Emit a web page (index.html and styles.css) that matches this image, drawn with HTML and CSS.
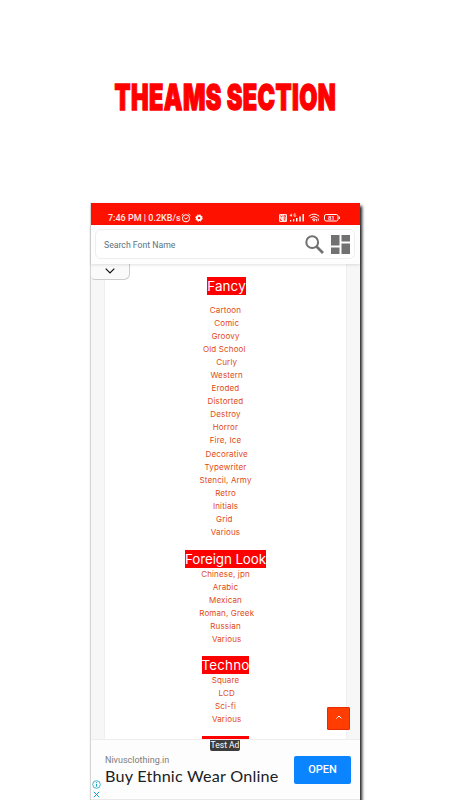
FILE: index.html
```html
<!DOCTYPE html>
<html lang="en">
<head>
    <meta charset="UTF-8">
    <meta name="viewport" content="width=device-width, initial-scale=1.0">
    <title>Theams Section</title>
    <link rel="stylesheet" href="styles.css">
</head>
<body>

    <h1 class="page-title"><span>THEAMS SECTION</span></h1>

    <div class="phone">
        <!-- Status Bar -->
        <div class="status-bar">
            <span class="status-time">7:46 PM | 0.2KB/s</span>
            <svg class="alarm" width="10" height="10" viewBox="0 0 10 10" fill="none" stroke="#fff">
                <circle cx="5" cy="5.3" r="3.6"/>
                <path d="M.7 2.4 2.5.8M9.3 2.4 7.5.8M3.4 4.8 5 6.2 7 4.2"/>
            </svg>
            <svg class="gear" width="8" height="8" viewBox="0 0 8 8" fill="none" stroke="#fff">
                <circle cx="4" cy="4" r="2.2" stroke-width="1.8"/>
                <circle cx="4" cy="4" r="3.3" stroke-width="1" stroke-dasharray="1.3 1.3"/>
            </svg>
            <span class="status-icons">
                <svg width="8" height="8" viewBox="0 0 8 8">
                    <rect width="8" height="8" rx="1.2" fill="#ffe4e0"/>
                    <path d="M1.5 1.5 2.5 3.2 3.5 1.5M5 1.5h1.5v1.7H5zM1.5 4.8v1.7h1.6M4.6 4.8h2M5.6 4.8v1.8" fill="none" stroke="#f10" stroke-width=".7"/>
                </svg>
                <svg class="signal" width="16" height="9" viewBox="0 0 16 9">
                    <path d="M2.5.7 1 2.7h2M2.6 1.3v2.2M6.8 1H5v2.2h1.8V2.3" fill="none" stroke="#fff" stroke-width=".7"/>
                    <path d="M1 7h1.3v1.5H1zM4 6h1.3v2.5H4zM7 5h1.5v3.5H7zM10.2 3.5h1.6v5h-1.6zM13.5 1H15v7.5h-1.5z" fill="#fff"/>
                </svg>
                <svg class="wifi" width="12" height="9" viewBox="0 0 12 9" fill="none" stroke="#fff">
                    <path d="M.8 3.2Q6-1 11.2 3.2M2.5 4.9Q6 2 9.5 4.9M4.1 6.5Q6 5 7.6 6.5"/>
                    <path d="M5.1 7.2h1.8L6 8.3zM8.6 6v2.5M10.3 5.5V8" fill="#fff" stroke-width=".8"/>
                </svg>
                <svg class="battery" width="17" height="8" viewBox="0 0 17 8">
                    <rect x=".5" y=".5" width="13.5" height="6.5" rx="1.7" fill="none" stroke="#fff"/>
                    <path d="M15.3 2.5v2.5" stroke="#fff" stroke-width="1.2"/>
                    <text x="7.3" y="6" class="battery-text">81</text>
                </svg>
            </span>
        </div>

        <!-- Search -->
        <div class="search-bar">
            <div class="search-box">
                <span class="search-label">Search Font Name</span>
                <svg class="search-icon" width="19" height="19" viewBox="0 0 19 19" fill="none" stroke="#717171">
                    <circle cx="7.2" cy="7.2" r="5.9" stroke-width="2"/>
                    <path d="M11.5 11.5 18 18" stroke-width="2.6"/>
                </svg>
                <svg class="grid-icon" width="19" height="19" viewBox="0 0 19 19" fill="#717171">
                    <path d="M0 0h8.500v10.500H0zM10.500 0H19v6.500h-8.500zM0 12.500h8.500V19H0zM10.500 8.500H19V19h-8.500z"/>
                </svg>
            </div>
        </div>

        <!-- Theme List -->
        <div class="content">
            <div class="drawer-tab">
                <svg width="10" height="6" viewBox="0 0 10 6" fill="none" stroke="#111" stroke-width="1.2"><path d="M.7.7 5 5 9.3.7"/></svg>
            </div>
            <div class="card">
                <h2 class="fancy"><span>Fancy</span></h2>
                <ul class="fancy-list">
                    <li>Cartoon</li>
                    <li>&nbsp;Comic</li>
                    <li>Groovy</li>
                    <li>Old School&nbsp;</li>
                    <li>&nbsp;Curly</li>
                    <li>&nbsp;Western</li>
                    <li>Eroded</li>
                    <li>Distorted</li>
                    <li>Destroy</li>
                    <li>Horror</li>
                    <li>Fire, Ice</li>
                    <li>&nbsp;Decorative</li>
                    <li>Typewriter</li>
                    <li>Stencil, Army</li>
                    <li>Retro</li>
                    <li>Initials</li>
                    <li>Grid&nbsp;</li>
                    <li>Various</li>
                </ul>
                <h2 class="foreign"><span>Foreign Look</span></h2>
                <ul>
                    <li>Chinese, jpn</li>
                    <li>Arabic</li>
                    <li>Mexican</li>
                    <li>&nbsp;Roman, Greek</li>
                    <li>Russian</li>
                    <li>&nbsp;Various</li>
                </ul>
                <h2 class="techno"><span>Techno</span></h2>
                <ul>
                    <li>Square</li>
                    <li>&nbsp;LCD</li>
                    <li>Sci-fi</li>
                    <li>&nbsp;Various</li>
                </ul>
                <div class="next-heading"></div>
            </div>
            <div class="to-top">
                <svg width="6" height="4" viewBox="0 0 6 4" fill="none" stroke="#fff"><path d="M.5 3.5 3 1l2.500 2.500"/></svg>
            </div>
        </div>

        <!-- Ad Banner -->
        <div class="ad">
            <span class="test-ad">Test Ad</span>
            <div class="ad-marks">
                <svg width="9" height="9" viewBox="0 0 9 9" fill="none" stroke="#12a5c4"><circle cx="4.5" cy="4.5" r="3.8" stroke-width=".8"/><path d="M4.5 4v2.7M4.5 2.2v1"/></svg>
                <svg width="7" height="7" viewBox="0 0 7 7" fill="none" stroke="#12a5c4"><path d="M.8.8 6.2 6.2M6.2.8.8 6.2"/></svg>
            </div>
            <div class="ad-text">
                <p class="ad-site">Nivusclothing.in</p>
                <p class="ad-title">Buy Ethnic Wear Online</p>
            </div>
            <div class="ad-button">OPEN</div>
        </div>
    </div>

</body>
</html>
```

FILE: styles.css
```css
/* Global Styles */
* {
    margin: 0;
    padding: 0;
    box-sizing: border-box;
}

body {
    width: 450px;
    height: 800px;
    overflow: hidden;
    background: #fff;
    font-family: Inter, sans-serif;
}

svg {
    display: block;
    flex: none;
}

/* Title */
.page-title {
    height: 203px;
    padding-top: 77px;
    text-align: center;
    font-size: 35px;
    font-weight: 900;
    line-height: 40px;
    color: #f00;
    white-space: nowrap;
}

.page-title span {
    display: inline-block;
    letter-spacing: 0.6px;
    transform: scaleX(0.67);
    -webkit-text-stroke: 1.3px #f00;
}

/* Phone */
.phone {
    display: flex;
    flex-direction: column;
    width: 269px;
    height: 597px;
    margin-left: 91px;
    background: #fff;
    box-shadow: 2px 3px 3px rgba(0, 0, 0, 0.9), -1px 0 1px rgba(0, 0, 0, 0.12);
}

/* Status Bar */
.status-bar {
    display: flex;
    align-items: center;
    height: 22px;
    padding: 7px 19px 0 17px;
    background: #f10;
    color: #ffe9e6;
    font-family: Roboto, sans-serif;
    font-size: 9px;
    font-weight: 500;
}

.status-time {
    width: 72px;
    white-space: nowrap;
}

.alarm {
    margin-left: 1px;
}

.gear {
    margin-left: 4px;
}

.status-icons {
    display: flex;
    align-items: center;
    margin-left: auto;
}

.signal {
    margin-left: 2px;
}

.wifi {
    margin-left: 3px;
}

.battery {
    margin-left: 4px;
}

.battery-text {
    font-size: 6px;
    fill: #fff;
    text-anchor: middle;
}

/* Search */
.search-bar {
    height: 39px;
    padding: 4px 5px 0 4px;
    background: #fdfdfd;
    box-shadow: 0 1px 3px rgba(0, 0, 0, 0.12);
    z-index: 1;
}

.search-box {
    display: flex;
    align-items: center;
    height: 30px;
    padding: 0 4px 0 8px;
    border: 1px solid #eee;
    border-radius: 6px;
    background: #fff;
}

.search-label {
    flex: 1;
    padding-top: 1px;
    font-family: Roboto, sans-serif;
    font-size: 8.7px;
    color: #5c7480;
}

.grid-icon {
    margin-left: 7px;
}

/* Theme List */
.content {
    position: relative;
    height: 475px;
    padding: 0 14px;
    background: #f7f7f7;
    overflow: hidden;
}

.drawer-tab {
    position: absolute;
    top: 0;
    left: 0;
    display: flex;
    justify-content: center;
    width: 39px;
    height: 16px;
    padding-top: 4px;
    background: #fafafa;
    border: 1px solid #ccc;
    border-width: 0 1px 1px 0;
    border-radius: 0 0 6px 4px;
}

.card {
    height: 475px;
    background: #fff;
    box-shadow: 0 0 1px rgba(0, 0, 0, 0.2);
    text-align: center;
}

.card h2 {
    display: flex;
    justify-content: center;
    height: 18px;
    font-size: 13.4px;
    font-weight: 400;
    line-height: 18px;
    color: #fff;
    white-space: nowrap;
}

.card h2 span {
    background: #f00;
}

.card .fancy {
    height: 31px;
    padding: 13px 0 0 2px;
    letter-spacing: 0.15px;
}

.card .foreign {
    margin-top: 11px;
    letter-spacing: -0.1px;
}

.card .techno {
    margin-top: 10px;
    letter-spacing: 0.15px;
}

.card ul {
    list-style: none;
}

.card .fancy-list {
    margin-top: 9px;
}

.card li {
    height: 13.06px;
    font-size: 8px;
    font-weight: 400;
    line-height: 13px;
    letter-spacing: 0.15px;
    color: #e04a14;
}

.next-heading {
    width: 47px;
    height: 18px;
    margin: 10px auto 0;
    background: #f00;
}

.to-top {
    position: absolute;
    top: 443px;
    left: 236px;
    display: flex;
    align-items: center;
    justify-content: center;
    width: 23px;
    height: 23px;
    padding-bottom: 3px;
    background: #ff3d00;
    border: 1px solid #e62b00;
    border-radius: 1px;
}

/* Ad Banner */
.ad {
    position: relative;
    display: flex;
    height: 61px;
    background: #fdfdfd;
    border-top: 1px solid #eee;
    border-bottom: 1px solid #e8e8e8;
}

.test-ad {
    position: absolute;
    top: 0;
    left: 119px;
    width: 30px;
    height: 11px;
    border-radius: 0 0 2px 2px;
    background: #3c3c3c;
    color: #fff;
    font-family: Roboto, sans-serif;
    font-size: 8.5px;
    line-height: 11px;
    text-align: center;
    white-space: nowrap;
}

.ad-marks {
    display: flex;
    flex-direction: column;
    align-items: center;
    gap: 2px;
    width: 9px;
    margin-left: 1px;
    padding-top: 40px;
}

.ad-text {
    flex: 1;
    padding: 14px 0 0 4px;
    white-space: nowrap;
}

.ad-site {
    font-family: Roboto, sans-serif;
    font-size: 9px;
    line-height: 13px;
    color: #7c7c7c;
}

.ad-title {
    font-family: Lato, sans-serif;
    font-size: 16.2px;
    letter-spacing: 0.2px;
    line-height: 17px;
    color: #202124;
}

.ad-button {
    width: 57px;
    height: 28px;
    margin: 16px 9px 0 0;
    border-radius: 2px;
    background: #0a84ff;
    color: #fff;
    font-family: Roboto, sans-serif;
    font-size: 11px;
    font-weight: 500;
    line-height: 28px;
    text-align: center;
}
```
